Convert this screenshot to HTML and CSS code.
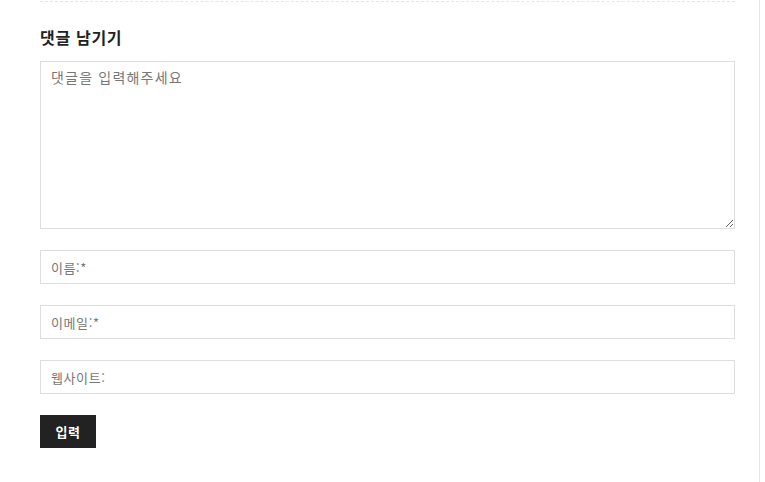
FILE: index.html
```html
<!DOCTYPE html>
<html lang="ko">
<head>
<meta charset="utf-8">
<link rel="stylesheet" href="styles.css">
</head>
<body>
<div class="page">
  <section class="comment">
    <h3 class="title">댓글 남기기</h3>
    <form class="form">
      <textarea class="field area" placeholder="댓글을 입력해주세요"></textarea>
      <input class="field line" type="text" placeholder="이름:*">
      <input class="field line" type="text" placeholder="이메일:*">
      <input class="field line" type="text" placeholder="웹사이트:">
      <button class="submit" type="button">입력</button>
    </form>
  </section>
</div>
</body>
</html>
```
FILE: styles.css
```css
html, body {
  margin: 0;
  padding: 0;
  background: #fff;
  font-family: "Noto Sans CJK KR", "Noto Sans", sans-serif;
}
.page {
  width: 760px;
  height: 482px;
  box-sizing: border-box;
  border-right: 1px solid #e6e6e6;
  padding-top: 1px;
}
.comment {
  margin-left: 40px;
  width: 695px;
  border-top: 1px dashed #e6e6e6;
}
.title {
  margin: 23px 0 12px;
  font-size: 16px;
  line-height: 24px;
  font-weight: 700;
  letter-spacing: 0.7px;
  color: #222;
}
.form {
  display: flex;
  flex-direction: column;
  align-items: flex-start;
  gap: 21px;
}
.field {
  display: block;
  width: 695px;
  box-sizing: border-box;
  border: 1px solid #dedede;
  background: #fff;
  font-family: "Noto Sans CJK KR", "Noto Sans", sans-serif;
  color: #333;
  outline: none;
  margin: 0;
}
.area {
  height: 168px;
  padding: 4px 10px;
  font-size: 14px;
  line-height: 22px;
  letter-spacing: 1.2px;
  resize: vertical;
}
.line {
  height: 34px;
  padding: 0 10px;
  font-size: 13px;
  letter-spacing: 0.6px;
}
.field::placeholder {
  color: #777;
  opacity: 1;
}
.submit {
  width: 56px;
  height: 33px;
  border: 0;
  margin: 0;
  background: #222;
  color: #fff;
  font-family: "Noto Sans CJK KR", "Noto Sans", sans-serif;
  font-size: 13px;
  font-weight: 700;
  letter-spacing: 0.5px;
  padding: 0;
}
```
